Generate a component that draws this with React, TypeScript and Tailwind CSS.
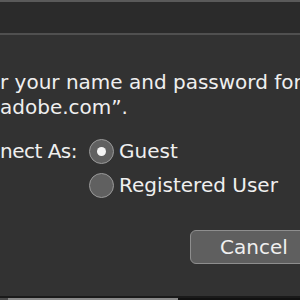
import React from "react";

function Radio({ checked }: { checked?: boolean }) {
  return (
    <div className="flex h-[25px] w-[25px] shrink-0 items-center justify-center rounded-full border-[1.5px] border-[#9a9a9a] bg-[#606060]">
      {checked && <div className="h-[9px] w-[9px] rounded-full bg-[#f4f4f4]" />}
    </div>
  );
}

export default function App() {
  return (
    <div
      className="flex h-[300px] w-[300px] flex-col overflow-hidden bg-[#323232] text-[20px] leading-[25px] text-[#efefef]"
      style={{ fontFamily: '"DejaVu Sans", sans-serif' }}
    >
      <div className="h-[2px] shrink-0 bg-[#5a5a5a]" />
      <div className="h-[31px] shrink-0 bg-[#2b2b2b]" />
      <div className="h-[2px] shrink-0 bg-[#505050]" />
      <div className="flex flex-1 flex-col pt-[35px]">
        <div className="whitespace-nowrap">r your name and password for</div>
        <div className="whitespace-nowrap">adobe.com”.</div>
        <div className="mt-[14px] grid grid-cols-[77px_1fr] gap-x-[12px]">
          <div className="flex h-[34px] items-center whitespace-nowrap tracking-[-0.5px]">nect As:</div>
          <div className="flex h-[34px] items-center gap-[5px] whitespace-nowrap">
            <Radio checked />
            <span>Guest</span>
          </div>
          <div />
          <div className="flex h-[34px] items-center gap-[5px] whitespace-nowrap">
            <Radio />
            <span>Registered User</span>
          </div>
        </div>
        <div className="mt-[28px] flex pl-[190px]">
          <div className="flex h-[34px] w-[128px] shrink-0 items-center justify-center rounded-[6px] border border-[#8e8e8e] bg-[#5f5f5f]">
            Cancel
          </div>
        </div>
      </div>
      <div className="h-[2px] shrink-0 bg-[#1a1a1a]" />
      <div className="flex h-[2px] shrink-0 bg-[#111111]">
        <div className="w-[8px] bg-[#4a4a4a]" />
        <div className="w-[170px] bg-[#8a8a8a]" />
      </div>
    </div>
  );
}
